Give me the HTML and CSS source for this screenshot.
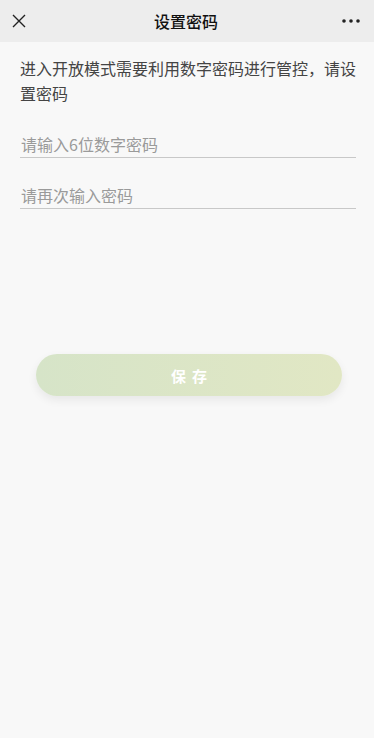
FILE: index.html
```html
<!DOCTYPE html>
<html lang="zh-CN">
<head>
  <meta charset="UTF-8">
  <title>设置密码</title>
  <link rel="stylesheet" href="styles.css">
</head>
<body>

  <div class="nav-bar">
    <span class="nav-icon">
      <svg width="14" height="14" viewBox="0 0 14 14"><path d="M1 1 L13 13 M13 1 L1 13" stroke="#222" stroke-width="1.4" fill="none"/></svg>
    </span>
    <div class="nav-title">设置密码</div>
    <span class="nav-icon nav-more">
      <svg width="18" height="4" viewBox="0 0 18 4"><circle cx="2" cy="2" r="1.8" fill="#222"/><circle cx="9" cy="2" r="1.8" fill="#222"/><circle cx="16" cy="2" r="1.8" fill="#222"/></svg>
    </span>
  </div>

  <div class="content">
    <p class="tip">进入开放模式需要利用数字密码进行管控，请设置密码</p>

    <div class="field">
      <input type="password" placeholder="请输入6位数字密码">
    </div>
    <div class="field">
      <input type="password" placeholder="请再次输入密码">
    </div>

    <button class="save-btn">保存</button>
  </div>

</body>
</html>
```

FILE: styles.css
```css
body {
  margin: 0;
  padding: 0;
  font-family: "Noto Sans CJK SC", "Noto Sans", sans-serif;
  background: #f8f8f8;
  color: #333;
  height: 738px;
}

.nav-bar {
  height: 42px;
  background: #ededed;
  display: flex;
  align-items: center;
  justify-content: space-between;
  padding: 0 14px 0 12px;
}

.nav-icon {
  width: 20px;
  display: flex;
  align-items: center;
}

.nav-more {
  justify-content: flex-end;
}

.nav-title {
  font-size: 16px;
  font-weight: 500;
  color: #111;
}

.content {
  padding: 14px 18px 0 20px;
}

.tip {
  margin: 0;
  font-size: 16px;
  line-height: 25px;
  color: #444;
}

.field {
  margin-top: 25px;
  border-bottom: 1px solid #c8c8c8;
}

.field + .field {
  margin-top: 24px;
}

.field input {
  width: 100%;
  border: none;
  background: transparent;
  outline: none;
  font-family: inherit;
  font-size: 16px;
  height: 26px;
  padding: 0 0 0 1px;
  color: #333;
}

.field input::placeholder {
  color: #9a9a9a;
}

.save-btn {
  display: block;
  margin: 145px 0 0 16px;
  width: 306px;
  height: 42px;
  border: none;
  border-radius: 21px;
  background: linear-gradient(90deg, #d6e4c8, #e1e7c4);
  box-shadow: 0 4px 10px rgba(0, 0, 0, 0.07);
  color: #fff;
  font-family: inherit;
  font-size: 15px;
  font-weight: 700;
  letter-spacing: 6px;
  text-indent: 6px;
}
```
